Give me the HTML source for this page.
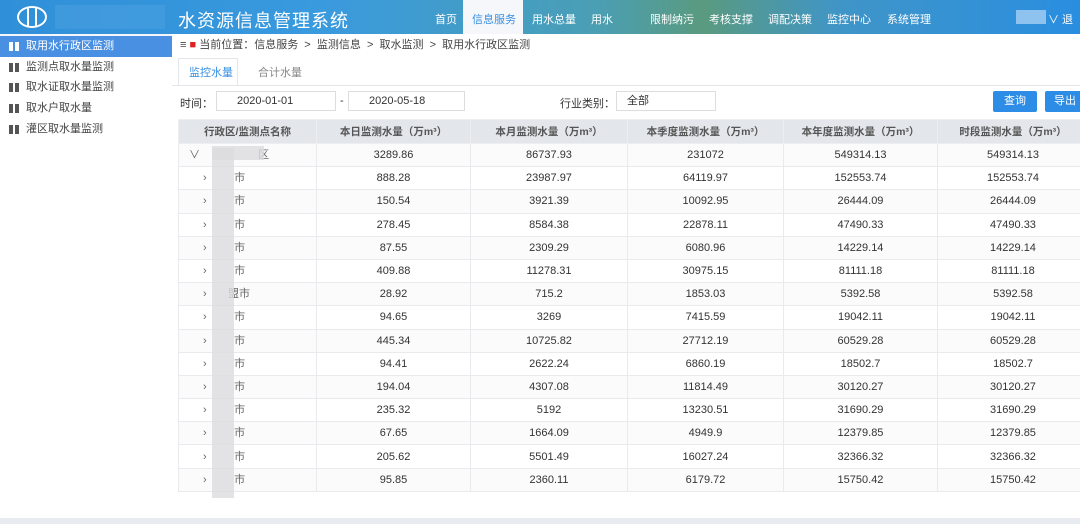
<!DOCTYPE html><html><head><meta charset="utf-8"><style>
*{margin:0;padding:0;box-sizing:border-box}
body{width:1080px;height:524px;overflow:hidden;font-family:"Liberation Sans","Noto Sans CJK SC",sans-serif;font-size:11px;color:#333;background:#f4f6f9;position:relative}
.hdr{position:absolute;left:0;top:0;width:1080px;height:34px;background:linear-gradient(90deg,#2f8fd8 0%,#3a9ade 30%,#4a9fb5 55%,#5a9a80 65%,#3f95c8 78%,#2a8ee0 100%)}
.hdr .t{position:absolute;left:178px;top:7px;color:#fff;font-size:18px;letter-spacing:1px}
.nav span{position:absolute;top:11px;color:#fff;font-size:11px}
.side{position:absolute;left:0;top:36px;width:172px;height:488px;background:#fff}
.side div{height:20.7px;line-height:20.7px;padding-left:26px;position:relative;font-size:11px;color:#444}
.side div:before{content:"";position:absolute;left:9px;top:6px;width:10px;height:9px;background:linear-gradient(90deg,#555 40%,transparent 40%,transparent 60%,#555 60%);}
.side .a{background:#4a90e2;color:#fff}
.side .a:before{background:linear-gradient(90deg,#fff 40%,transparent 40%,transparent 60%,#fff 60%)}
.bc{position:absolute;left:172px;top:34px;width:908px;height:22px;background:#fff;line-height:22px;padding-left:8px;color:#444}
.main{position:absolute;left:172px;top:56px;width:908px;height:468px;background:#fff}
.tab{position:absolute;top:64px;font-size:11px}
.inp{position:absolute;top:91px;height:20px;border:1px solid #ddd;background:#fff;line-height:18px;padding-left:20px;color:#333}
.btn{position:absolute;top:91px;height:21px;background:#2d8de6;color:#fff;line-height:21px;text-align:center;border-radius:2px}
table{position:absolute;left:178px;top:119px;border-collapse:collapse;width:910px;table-layout:fixed}
th{height:24px;background:#e3e6ea;font-weight:bold;color:#555;font-size:10.5px;border:1px solid #eceef0}
td{height:23.2px;padding:0;line-height:20px;text-align:center;border:1px solid #e8eaed;font-size:11px;color:#333}
td.n{text-align:left;padding-left:24px;color:#666}
tr:nth-child(even) td{background:#fbfbfc}
</style></head><body>
<div class="hdr">
<div style="position:absolute;left:17px;top:6px;width:30px;height:22px;border:2px solid #fff;border-radius:50%"></div>
<div style="position:absolute;left:27px;top:8px;width:10px;height:18px;border-left:2px solid #fff;border-right:2px solid #fff"></div>
<div style="position:absolute;left:55px;top:5px;width:110px;height:24px;background:#4a9fe0;opacity:.6"></div>
<div class="t">水资源信息管理系统</div>
<div style="position:absolute;left:463px;top:0;width:60px;height:34px;background:#f5f7fa"></div>
<div class="nav"><span style="left:435px">首页</span><span style="left:472px;color:#3a8fe0">信息服务</span><span style="left:532px">用水总量</span><span style="left:591px">用水</span><span style="left:650px">限制纳污</span><span style="left:709px">考核支撑</span><span style="left:768px">调配决策</span><span style="left:827px">监控中心</span><span style="left:887px">系统管理</span><span style="left:1048px">∨ 退</span></div>
<div style="position:absolute;left:1016px;top:10px;width:30px;height:14px;background:#8fc3ef"></div>
</div>
<div class="side"><div class="a">取用水行政区监测</div><div>监测点取水量监测</div><div>取水证取水量监测</div><div>取水户取水量</div><div>灌区取水量监测</div></div>
<div class="bc">≡ <span style="color:#d22">■</span> 当前位置：信息服务 &nbsp;&gt;&nbsp; 监测信息 &nbsp;&gt;&nbsp; 取水监测 &nbsp;&gt;&nbsp; 取用水行政区监测</div>
<div class="main"></div>
<div style="position:absolute;left:178px;top:58px;width:60px;height:28px;background:#fff;border:1px solid #e4e6e9;border-bottom:none"></div>
<div style="position:absolute;left:172px;top:85px;width:908px;height:1px;background:#e4e6e9"></div>
<div class="tab" style="left:189px;color:#3a8fe0">监控水量</div><div class="tab" style="left:258px;color:#888">合计水量</div>
<div style="position:absolute;left:180px;top:95px">时间：</div>
<div class="inp" style="left:216px;width:120px">2020-01-01</div>
<div style="position:absolute;left:340px;top:95px">-</div>
<div class="inp" style="left:348px;width:117px">2020-05-18</div>
<div style="position:absolute;left:560px;top:95px">行业类别：</div>
<div class="inp" style="left:616px;width:100px;padding-left:10px">全部</div>
<div class="btn" style="left:993px;width:44px">查询</div>
<div class="btn" style="left:1045px;width:40px">导出</div>
<table><colgroup><col style="width:138px"><col style="width:154px"><col style="width:157px"><col style="width:156px"><col style="width:154px"><col style="width:151px"></colgroup>
<tr><th>行政区/监测点名称</th><th>本日监测水量（万m³）</th><th>本月监测水量（万m³）</th><th>本季度监测水量（万m³）</th><th>本年度监测水量（万m³）</th><th>时段监测水量（万m³）</th></tr>
<tr><td class="n" style="padding-left:10px">∨ &nbsp; &nbsp; &nbsp; &nbsp; &nbsp; &nbsp; &nbsp; &nbsp; &nbsp; 区</td><td>3289.86</td><td>86737.93</td><td>231072</td><td>549314.13</td><td>549314.13</td></tr>
<tr><td class="n">› &nbsp; &nbsp; &nbsp; &nbsp; 市</td><td>888.28</td><td>23987.97</td><td>64119.97</td><td>152553.74</td><td>152553.74</td></tr>
<tr><td class="n">› &nbsp; &nbsp; &nbsp; &nbsp; 市</td><td>150.54</td><td>3921.39</td><td>10092.95</td><td>26444.09</td><td>26444.09</td></tr>
<tr><td class="n">› &nbsp; &nbsp; &nbsp; &nbsp; 市</td><td>278.45</td><td>8584.38</td><td>22878.11</td><td>47490.33</td><td>47490.33</td></tr>
<tr><td class="n">› &nbsp; &nbsp; &nbsp; &nbsp; 市</td><td>87.55</td><td>2309.29</td><td>6080.96</td><td>14229.14</td><td>14229.14</td></tr>
<tr><td class="n">› &nbsp; &nbsp; &nbsp; &nbsp; 市</td><td>409.88</td><td>11278.31</td><td>30975.15</td><td>81111.18</td><td>81111.18</td></tr>
<tr><td class="n">› &nbsp; &nbsp; &nbsp; 盟市</td><td>28.92</td><td>715.2</td><td>1853.03</td><td>5392.58</td><td>5392.58</td></tr>
<tr><td class="n">› &nbsp; &nbsp; &nbsp; &nbsp; 市</td><td>94.65</td><td>3269</td><td>7415.59</td><td>19042.11</td><td>19042.11</td></tr>
<tr><td class="n">› &nbsp; &nbsp; &nbsp; &nbsp; 市</td><td>445.34</td><td>10725.82</td><td>27712.19</td><td>60529.28</td><td>60529.28</td></tr>
<tr><td class="n">› &nbsp; &nbsp; &nbsp; &nbsp; 市</td><td>94.41</td><td>2622.24</td><td>6860.19</td><td>18502.7</td><td>18502.7</td></tr>
<tr><td class="n">› &nbsp; &nbsp; &nbsp; &nbsp; 市</td><td>194.04</td><td>4307.08</td><td>11814.49</td><td>30120.27</td><td>30120.27</td></tr>
<tr><td class="n">› &nbsp; &nbsp; &nbsp; &nbsp; 市</td><td>235.32</td><td>5192</td><td>13230.51</td><td>31690.29</td><td>31690.29</td></tr>
<tr><td class="n">› &nbsp; &nbsp; &nbsp; &nbsp; 市</td><td>67.65</td><td>1664.09</td><td>4949.9</td><td>12379.85</td><td>12379.85</td></tr>
<tr><td class="n">› &nbsp; &nbsp; &nbsp; &nbsp; 市</td><td>205.62</td><td>5501.49</td><td>16027.24</td><td>32366.32</td><td>32366.32</td></tr>
<tr><td class="n">› &nbsp; &nbsp; &nbsp; &nbsp; 市</td><td>95.85</td><td>2360.11</td><td>6179.72</td><td>15750.42</td><td>15750.42</td></tr>
</table>
<div style="position:absolute;left:212px;top:148px;width:22px;height:350px;background:#dcdcdf;opacity:.8"></div>
<div style="position:absolute;left:212px;top:146px;width:52px;height:14px;background:#dcdcdf;opacity:.8"></div>
<div style="position:absolute;left:0;top:518px;width:1080px;height:6px;background:#e8ecf1"></div>
</body></html>
